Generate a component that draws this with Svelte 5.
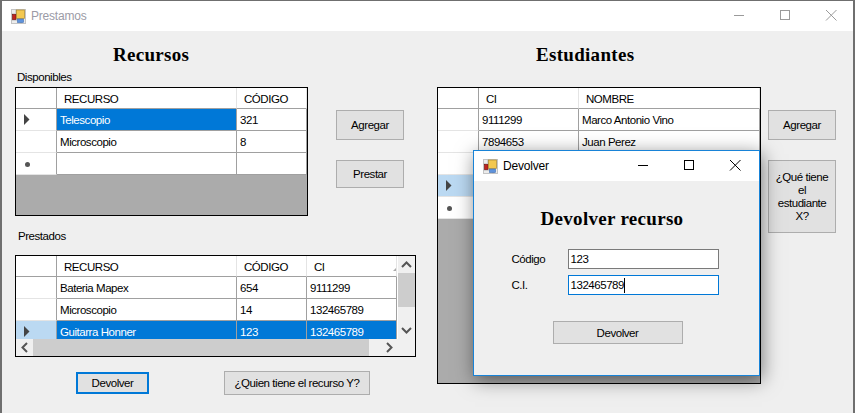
<script>
  const recursos = {
    cols: [{ name: "RECURSO", w: 180 }, { name: "CÓDIGO", w: 70 }],
    rows: [
      { cells: ["Telescopio", "321"], mark: "current", selected: [0] },
      { cells: ["Microscopio", "8"] },
      { cells: ["", ""], mark: "new" }
    ]
  }
  const prestados = {
    cols: [{ name: "RECURSO", w: 180 }, { name: "CÓDIGO", w: 70 }, { name: "CI", w: 90 }],
    rows: [
      { cells: ["Bateria Mapex", "654", "9111299"] },
      { cells: ["Microscopio", "14", "132465789"] },
      { cells: ["Guitarra Honner", "123", "132465789"], mark: "active", selected: [0, 1, 2] }
    ]
  }
  const estudiantes = {
    cols: [{ name: "CI", w: 100 }, { name: "NOMBRE", w: 181 }],
    rows: [
      { cells: ["9111299", "Marco Antonio Vino"] },
      { cells: ["7894653", "Juan Perez"] },
      { cells: ["", ""] },
      { cells: ["", ""], mark: "active" },
      { cells: ["", ""], mark: "new" }
    ]
  }
  const gridCols = (t) => "41px " + t.cols.map((c) => c.w + "px").join(" ")
</script>

{#snippet appIcon()}
  <svg class="app-icon" width="15" height="15" viewBox="0 0 15 15" aria-hidden="true">
    <rect x="0.5" y="0.500" width="14" height="14" fill="#ececec" stroke="#c4c4c4" />
    <path d="M0.500 5h5M0.500 11h6M5 0.500v4M10 11v3.500" stroke="#b4b4b4" stroke-width="1" fill="none" />
    <rect x="1.500" y="5.500" width="3.500" height="5" fill="#c0241e" stroke="#7a1512" stroke-width="0.7" />
    <rect x="5.500" y="1" width="8" height="8.500" fill="#f3c850" stroke="#a8862c" stroke-width="0.7" />
    <rect x="6.500" y="10" width="6" height="3.500" fill="#5f93dc" stroke="#3f6db2" stroke-width="0.6" />
  </svg>
{/snippet}

{#snippet caption(title, cls)}
  <div class="titlebar {cls}">
    {@render appIcon()}
    <span class="title-text">{title}</span>
    <div class="controls">
      <svg width="46" height="30" viewBox="0 0 46 30" aria-hidden="true"><path d="M18 14.500h10" /></svg>
      <svg width="46" height="30" viewBox="0 0 46 30" aria-hidden="true"><rect x="18.500" y="9.500" width="9" height="9" /></svg>
      <svg width="46" height="30" viewBox="0 0 46 30" aria-hidden="true"><path d="M18 9l10.500 10.500M28.500 9L18 19.500" /></svg>
    </div>
  </div>
{/snippet}

{#snippet marker(kind)}
  {#if kind === "current" || kind === "active"}
    <svg width="7" height="11" viewBox="0 0 7 11" aria-hidden="true"><path d="M1 0l5.500 5.500L1 11z" fill="#444" /></svg>
  {:else if kind === "new"}
    <span class="star"></span>
  {/if}
{/snippet}

{#snippet table(t)}
  <div class="tbl" style="grid-template-columns: {gridCols(t)}">
    <div class="corner"></div>
    {#each t.cols as c}
      <div class="head">{c.name}</div>
    {/each}
    {#each t.rows as r}
      <div class="rowhead" class:active={r.mark === "active"}>{@render marker(r.mark)}</div>
      {#each r.cells as cell, i}
        <div class="cell" class:sel={r.selected?.includes(i)}>{cell}</div>
      {/each}
    {/each}
  </div>
{/snippet}

<div class="screen">
  <div class="window">
    {@render caption("Prestamos", "inactive")}
    <div class="client">
      <section class="col left">
        <h1 class="recursos">Recursos</h1>
        <div class="lbl disponibles">Disponibles</div>
        <div class="split">
          <div class="dgv dgv-recursos">{@render table(recursos)}</div>
          <div class="side">
            <button class="agregar">Agregar</button>
            <button class="prestar">Prestar</button>
          </div>
        </div>
        <div class="lbl prestados-lbl">Prestados</div>
        <div class="dgv dgv-prestados">
          <div class="scroll-area">
            <div class="scroll-inner">{@render table(prestados)}</div>
            <span class="sort"></span>
          </div>
          <div class="vbar">
            <svg width="17" height="17" viewBox="0 0 17 17" aria-hidden="true"><path d="M4 11l4.500-4.500L13 11" /></svg>
            <div class="vtrack"><div class="vthumb"></div></div>
            <svg width="17" height="17" viewBox="0 0 17 17" aria-hidden="true"><path d="M4 6l4.500 4.500L13 6" /></svg>
          </div>
          <div class="hbar">
            <svg width="17" height="17" viewBox="0 0 17 17" aria-hidden="true"><path d="M11 4L6.500 8.500 11 13" /></svg>
            <div class="hthumb"></div>
            <svg width="17" height="17" viewBox="0 0 17 17" aria-hidden="true"><path d="M6 4l4.500 4.500L6 13" /></svg>
          </div>
          <div class="sizer"></div>
        </div>
        <div class="actions">
          <button class="devolver focused">Devolver</button>
          <button class="quien">¿Quien tiene el recurso Y?</button>
        </div>
      </section>

      <section class="col right">
        <h1 class="estudiantes">Estudiantes</h1>
        <div class="split">
          <div class="dgv dgv-estudiantes">{@render table(estudiantes)}</div>
          <div class="side">
            <button class="agregar">Agregar</button>
            <button class="que">¿Qué tiene el estudiante X?</button>
          </div>
        </div>
      </section>
    </div>
  </div>

  <div class="dialog">
    {@render caption("Devolver", "active-bar")}
    <div class="dialog-body">
      <h2>Devolver recurso</h2>
      <div class="fields">
        <label for="codigo">Código</label>
        <div class="input" id="codigo">123</div>
        <label for="ci">C.I.</label>
        <div class="input focus" id="ci">132465789<span class="caret"></span></div>
      </div>
      <button class="dlg-btn">Devolver</button>
    </div>
  </div>
</div>

<style>
  :global(body) {
    margin: 0;
    overflow: hidden;
  }
  .screen {
    position: relative;
    width: 855px;
    height: 413px;
    overflow: hidden;
    box-sizing: border-box;
    padding: 1px 2px 0 2px;
    background: #6f6f6f;
    font-family: "Liberation Sans", Arial, sans-serif;
    font-size: 11.5px;
    letter-spacing: -0.45px;
    color: #000;
  }
  .window {
    height: 412px;
    background: #efefef;
    display: flex;
    flex-direction: column;
  }
  .titlebar {
    height: 30px;
    flex: none;
    display: flex;
    align-items: center;
    background: #fff;
    padding-left: 9px;
  }
  .app-icon {
    flex: none;
  }
  .title-text {
    margin-left: 5px;
    font-size: 12px;
    letter-spacing: -0.2px;
  }
  .controls {
    margin-left: auto;
    display: flex;
  }
  .controls svg {
    display: block;
    fill: none;
    stroke: #000;
    stroke-width: 1;
  }
  .inactive .title-text {
    color: #9b9ba6;
  }
  .inactive .controls {
    margin-right: -1px;
  }
  .inactive .controls svg {
    stroke: #9a9a9a;
  }
  .client {
    flex: 1;
    display: flex;
  }
  .col {
    display: flex;
    flex-direction: column;
  }
  .left {
    width: 435px;
    padding-left: 13px;
    box-sizing: border-box;
  }
  h1 {
    margin: 0;
    font-family: "Liberation Serif", "Times New Roman", serif;
    font-size: 19px;
    font-weight: bold;
    line-height: 22px;
    letter-spacing: 0.3px;
  }
  .recursos {
    margin: 13px 0 0 98px;
  }
  .estudiantes {
    margin: 13px 0 0 99px;
  }
  .lbl {
    line-height: 14px;
  }
  .disponibles {
    margin: 4px 0 0 2px;
  }
  .split {
    display: flex;
    align-items: flex-start;
  }
  .left .split {
    margin-top: 3px;
  }
  .right .split {
    margin-top: 21px;
  }
  .side {
    display: flex;
    flex-direction: column;
    padding-top: 23px;
    gap: 20px;
  }
  .left .side {
    margin-left: 28px;
  }
  .right .side {
    margin-left: 7px;
  }
  button {
    margin: 0;
    padding: 0;
    box-sizing: border-box;
    background: #e1e1e1;
    border: 1px solid #adadad;
    font: inherit;
    letter-spacing: inherit;
    color: #000;
    width: 68px;
  }
  .agregar {
    height: 30px;
  }
  .prestar {
    height: 28px;
  }
  .que {
    height: 73px;
    padding: 0 4px;
    line-height: 13px;
  }
  .dgv {
    box-sizing: border-box;
    border: 1px solid #000;
    background: #ababab;
    overflow: hidden;
  }
  .dgv-recursos {
    width: 293px;
    height: 129px;
  }
  .dgv-estudiantes {
    width: 324px;
    height: 297px;
  }
  .tbl {
    display: grid;
    grid-auto-rows: 22px;
    grid-template-rows: 21px;
    width: max-content;
    background: #fff;
  }
  .corner,
  .head,
  .rowhead,
  .cell {
    box-sizing: border-box;
    background: #fff;
    display: flex;
    align-items: center;
  }
  .corner {
    border-right: 1px solid #a0a0a0;
    border-bottom: 1px solid #a0a0a0;
  }
  .head {
    padding: 1px 0 0 7px;
    border-right: 1px solid #e4e4e4;
    border-bottom: 1px solid #a0a0a0;
  }
  .rowhead {
    border-right: 1px solid #a0a0a0;
    border-bottom: 1px solid #e4e4e4;
    padding-left: 7px;
  }
  .rowhead.active {
    background: #bbd9f2;
  }
  .cell {
    padding-left: 3px;
    border-right: 1px solid #a0a0a0;
    border-bottom: 1px solid #a0a0a0;
    white-space: nowrap;
  }
  .cell.sel {
    background: #0078d7;
    color: #fff;
  }
  .star {
    width: 5px;
    height: 5px;
    margin: 2px 0 0 2px;
    border-radius: 50%;
    background: #555;
  }
  .prestados-lbl {
    margin: 13px 0 0 3px;
  }
  .dgv-prestados {
    margin-top: 12px;
    width: 401px;
    height: 102px;
    display: grid;
    grid-template-columns: 1fr 17px;
    grid-template-rows: 1fr 17px;
    background: #efefef;
  }
  .scroll-area {
    position: relative;
    overflow: hidden;
    background: #fff;
  }
  .sort {
    position: absolute;
    right: 2px;
    top: 12px;
    width: 0;
    height: 0;
    border-left: 3px solid transparent;
    border-bottom: 3px solid #aaa;
  }
  .vbar,
  .hbar {
    background: #f0f0f0;
    display: flex;
  }
  .vbar {
    flex-direction: column;
  }
  .vbar svg,
  .hbar svg {
    flex: none;
    fill: none;
    stroke: #555;
    stroke-width: 2;
  }
  .vtrack {
    flex: 1;
  }
  .vthumb {
    height: 34px;
    background: #cdcdcd;
  }
  .hbar {
    align-items: stretch;
  }
  .hthumb {
    width: 336px;
    background: #cdcdcd;
  }
  .hbar svg:last-child {
    margin-left: auto;
  }
  .sizer {
    background: #f0f0f0;
  }
  .actions {
    display: flex;
    align-items: center;
    margin: 14px 0 0 61px;
    gap: 75px;
  }
  .devolver {
    width: 73px;
    height: 22px;
  }
  .devolver.focused {
    border: 2px solid #0078d7;
  }
  .quien {
    width: 146px;
    height: 24px;
  }
  .right {
    padding-left: 0;
  }
  .dialog {
    position: absolute;
    left: 473px;
    top: 150px;
    width: 287px;
    height: 226px;
    box-sizing: border-box;
    border: 1px solid #1883d7;
    background: #efefef;
    box-shadow: 2px 4px 18px rgba(0, 0, 0, 0.5);
    display: flex;
    flex-direction: column;
  }
  .dialog .titlebar {
    padding-left: 9px;
    padding-right: 1px;
  }
  .dialog-body {
    flex: 1;
    display: flex;
    flex-direction: column;
    align-items: center;
  }
  h2 {
    margin: 27px 0 0 -9px;
    font-family: "Liberation Serif", "Times New Roman", serif;
    font-size: 19px;
    font-weight: bold;
    line-height: 22px;
    letter-spacing: 0.3px;
  }
  .fields {
    margin: 19px 0 0 -3px;
    display: grid;
    grid-template-columns: 56px 151px;
    row-gap: 6px;
    align-items: center;
  }
  .input {
    box-sizing: border-box;
    height: 20px;
    border: 1px solid #7a7a7a;
    background: #fff;
    padding-left: 2px;
    display: flex;
    align-items: center;
  }
  .input.focus {
    border-color: #0078d7;
  }
  .caret {
    width: 1px;
    height: 15px;
    background: #000;
  }
  .dlg-btn {
    margin: 26px 0 0 2px;
    width: 130px;
    height: 23px;
  }
</style>
